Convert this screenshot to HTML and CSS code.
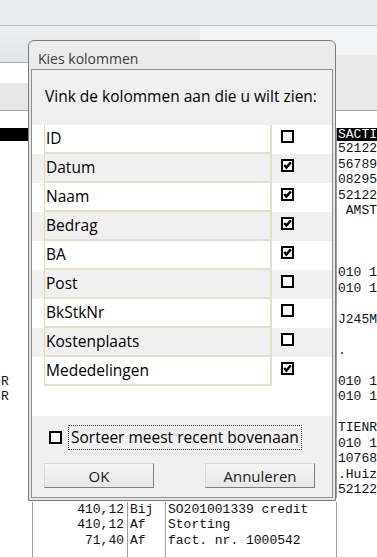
FILE: index.html
```html
<!DOCTYPE html>
<html lang="nl">
<head>
<meta charset="UTF-8">
<meta name="viewport" content="width=device-width, initial-scale=1.0">
<title>Kies kolommen</title>
<link rel="stylesheet" href="styles.css">
</head>
<body>
  <div class="app">
    <div class="menubar"></div>
    <div class="toolband">
      <div class="toolband-left">
        <div class="tool-top"></div>
        <div class="tool-white"></div>
        <div class="tool-gray"></div>
      </div>
      <div class="toolband-right">
        <div class="tool-top-right"></div>
      </div>
    </div>
    <div class="white-strip"></div>

    <div class="grid">
      <div class="row head"><span class="c0"></span><span class="c1"></span><span class="c2"></span><span class="c3"></span><span class="c4">SACTI</span></div>
      <div class="row"><span class="c0"></span><span class="c1"></span><span class="c2"></span><span class="c3"></span><span class="c4">52122</span></div>
      <div class="row"><span class="c0"></span><span class="c1"></span><span class="c2"></span><span class="c3"></span><span class="c4">56789</span></div>
      <div class="row"><span class="c0"></span><span class="c1"></span><span class="c2"></span><span class="c3"></span><span class="c4">08295</span></div>
      <div class="row"><span class="c0"></span><span class="c1"></span><span class="c2"></span><span class="c3"></span><span class="c4">52122</span></div>
      <div class="row"><span class="c0"></span><span class="c1"></span><span class="c2"></span><span class="c3"></span><span class="c4"> AMST</span></div>
      <div class="row"><span class="c0"></span><span class="c1"></span><span class="c2"></span><span class="c3"></span><span class="c4"></span></div>
      <div class="row"><span class="c0"></span><span class="c1"></span><span class="c2"></span><span class="c3"></span><span class="c4"></span></div>
      <div class="row"><span class="c0"></span><span class="c1"></span><span class="c2"></span><span class="c3"></span><span class="c4"></span></div>
      <div class="row"><span class="c0"></span><span class="c1"></span><span class="c2"></span><span class="c3"></span><span class="c4">010 1</span></div>
      <div class="row"><span class="c0"></span><span class="c1"></span><span class="c2"></span><span class="c3"></span><span class="c4">010 1</span></div>
      <div class="row"><span class="c0"></span><span class="c1"></span><span class="c2"></span><span class="c3"></span><span class="c4"></span></div>
      <div class="row"><span class="c0"></span><span class="c1"></span><span class="c2"></span><span class="c3"></span><span class="c4">J245M</span></div>
      <div class="row"><span class="c0"></span><span class="c1"></span><span class="c2"></span><span class="c3"></span><span class="c4"></span></div>
      <div class="row"><span class="c0"></span><span class="c1"></span><span class="c2"></span><span class="c3"></span><span class="c4">.</span></div>
      <div class="row"><span class="c0"></span><span class="c1"></span><span class="c2"></span><span class="c3"></span><span class="c4"></span></div>
      <div class="row"><span class="c0">R</span><span class="c1"></span><span class="c2"></span><span class="c3"></span><span class="c4">010 1</span></div>
      <div class="row"><span class="c0">R</span><span class="c1"></span><span class="c2"></span><span class="c3"></span><span class="c4">010 1</span></div>
      <div class="row"><span class="c0"></span><span class="c1"></span><span class="c2"></span><span class="c3"></span><span class="c4"></span></div>
      <div class="row"><span class="c0"></span><span class="c1"></span><span class="c2"></span><span class="c3"></span><span class="c4">TIENR</span></div>
      <div class="row"><span class="c0"></span><span class="c1"></span><span class="c2"></span><span class="c3"></span><span class="c4">010 1</span></div>
      <div class="row"><span class="c0"></span><span class="c1"></span><span class="c2"></span><span class="c3"></span><span class="c4">10768</span></div>
      <div class="row"><span class="c0"></span><span class="c1"></span><span class="c2"></span><span class="c3"></span><span class="c4">.Huiz</span></div>
      <div class="row"><span class="c0"></span><span class="c1"></span><span class="c2"></span><span class="c3"></span><span class="c4">52122</span></div>
      <div class="row first-amount"><span class="c0"></span><span class="c1">410,12</span><span class="c2">Bij</span><span class="c3">SO201001339 credit</span><span class="c4"></span></div>
      <div class="row"><span class="c0"></span><span class="c1">410,12</span><span class="c2">Af</span><span class="c3">Storting</span><span class="c4"></span></div>
      <div class="row"><span class="c0"></span><span class="c1">71,40</span><span class="c2">Af</span><span class="c3">fact. nr. 1000542</span><span class="c4"></span></div>
      <div class="row"><span class="c0"></span><span class="c1"></span><span class="c2"></span><span class="c3"></span><span class="c4"></span></div>
    </div>
  </div>

  <div class="dialog">
    <div class="dialog-title">Kies kolommen</div>
    <div class="dialog-client">
      <div class="dialog-intro">Vink de kolommen aan die u wilt zien:</div>

      <div class="column-list">
        <div class="column-row">
          <div class="column-name">ID</div>
          <div class="column-check"><svg class="checkbox" width="13" height="13" viewBox="0 0 13 13"><rect x="1" y="1" width="11" height="11" fill="#fff" stroke="#000" stroke-width="2"/></svg></div>
        </div>
        <div class="column-row">
          <div class="column-name">Datum</div>
          <div class="column-check"><svg class="checkbox" width="13" height="13" viewBox="0 0 13 13"><rect x="1" y="1" width="11" height="11" fill="#fff" stroke="#000" stroke-width="2"/><polyline points="3.2,6 5.4,8.6 9.8,3.4" fill="none" stroke="#000" stroke-width="2.4"/></svg></div>
        </div>
        <div class="column-row">
          <div class="column-name">Naam</div>
          <div class="column-check"><svg class="checkbox" width="13" height="13" viewBox="0 0 13 13"><rect x="1" y="1" width="11" height="11" fill="#fff" stroke="#000" stroke-width="2"/><polyline points="3.2,6 5.4,8.6 9.8,3.4" fill="none" stroke="#000" stroke-width="2.4"/></svg></div>
        </div>
        <div class="column-row">
          <div class="column-name">Bedrag</div>
          <div class="column-check"><svg class="checkbox" width="13" height="13" viewBox="0 0 13 13"><rect x="1" y="1" width="11" height="11" fill="#fff" stroke="#000" stroke-width="2"/><polyline points="3.2,6 5.4,8.6 9.8,3.4" fill="none" stroke="#000" stroke-width="2.4"/></svg></div>
        </div>
        <div class="column-row">
          <div class="column-name">BA</div>
          <div class="column-check"><svg class="checkbox" width="13" height="13" viewBox="0 0 13 13"><rect x="1" y="1" width="11" height="11" fill="#fff" stroke="#000" stroke-width="2"/><polyline points="3.2,6 5.4,8.6 9.8,3.4" fill="none" stroke="#000" stroke-width="2.4"/></svg></div>
        </div>
        <div class="column-row">
          <div class="column-name">Post</div>
          <div class="column-check"><svg class="checkbox" width="13" height="13" viewBox="0 0 13 13"><rect x="1" y="1" width="11" height="11" fill="#fff" stroke="#000" stroke-width="2"/></svg></div>
        </div>
        <div class="column-row">
          <div class="column-name">BkStkNr</div>
          <div class="column-check"><svg class="checkbox" width="13" height="13" viewBox="0 0 13 13"><rect x="1" y="1" width="11" height="11" fill="#fff" stroke="#000" stroke-width="2"/></svg></div>
        </div>
        <div class="column-row">
          <div class="column-name">Kostenplaats</div>
          <div class="column-check"><svg class="checkbox" width="13" height="13" viewBox="0 0 13 13"><rect x="1" y="1" width="11" height="11" fill="#fff" stroke="#000" stroke-width="2"/></svg></div>
        </div>
        <div class="column-row">
          <div class="column-name">Mededelingen</div>
          <div class="column-check"><svg class="checkbox" width="13" height="13" viewBox="0 0 13 13"><rect x="1" y="1" width="11" height="11" fill="#fff" stroke="#000" stroke-width="2"/><polyline points="3.2,6 5.4,8.6 9.8,3.4" fill="none" stroke="#000" stroke-width="2.4"/></svg></div>
        </div>
      </div>

      <div class="dialog-footer">
        <div class="sort-option">
          <svg class="checkbox" width="13" height="13" viewBox="0 0 13 13"><rect x="1" y="1" width="11" height="11" fill="#fff" stroke="#000" stroke-width="2"/></svg>
          <span class="sort-label">Sorteer meest recent bovenaan</span>
        </div>
        <div class="dialog-buttons">
          <button type="button">OK</button>
          <button type="button">Annuleren</button>
        </div>
      </div>
    </div>
  </div>
</body>
</html>
```

FILE: styles.css
```css
body {
  margin: 0;
  width: 377px;
  height: 557px;
  overflow: hidden;
  background-color: #fff;
  font-family: "Open Sans", "Noto Sans", sans-serif;
  position: relative;
}

/* application behind the dialog */

.menubar {
  height: 25px;
  background-color: #e9ecf0;
  border-bottom: 1px solid #bcc0c6;
}

.toolband {
  display: flex;
  height: 84px;
  border-bottom: 1px solid #a3a3a3;
}

.toolband-left {
  width: 200px;
  display: flex;
  flex-direction: column;
}

.tool-top {
  height: 36px;
  background: linear-gradient(#edf0f3, #e2e5e9);
  border-bottom: 1px solid #a9adb3;
}

.tool-white {
  height: 20px;
  background-color: #fff;
}

.tool-gray {
  flex: 1;
  background-color: #e8e8e8;
}

.toolband-right {
  flex: 1;
  background-color: #e9e9e9;
}

.tool-top-right {
  height: 29px;
  background-color: #f2f3f5;
}

.white-strip {
  height: 17px;
}

.grid {
  font-family: "Liberation Mono", monospace;
  font-size: 13px;
  color: #111;
}

.row {
  display: flex;
  height: 15.5px;
  line-height: 15.5px;
  white-space: pre;
}

.row.head {
  height: 13px;
  line-height: 13px;
  background-color: #000;
  color: #fff;
}

.row.first-amount {
  margin-top: 4px;
}

.c0 {
  width: 32px;
  padding-left: 1px;
  box-sizing: border-box;
}

.c1 {
  width: 95px;
  text-align: right;
  padding-right: 3px;
  border-left: 1px solid #a0a0a0;
  box-sizing: border-box;
}

.c2 {
  width: 38px;
  padding-left: 2px;
  border-left: 1px solid #a0a0a0;
  box-sizing: border-box;
}

.c3 {
  width: 171px;
  padding-left: 2px;
  border-left: 1px solid #a0a0a0;
  box-sizing: border-box;
}

.c4 {
  flex: 1;
  padding-left: 1px;
  border-left: 1px solid #a0a0a0;
  overflow: hidden;
}

/* dialog window */

.dialog {
  position: absolute;
  left: 28px;
  top: 40px;
  width: 308px;
  height: 461px;
  box-sizing: border-box;
  padding: 0 2px 2px 2px;
  border: 1px solid #7a7a7a;
  border-radius: 6px 6px 0 0;
  background: linear-gradient(#ededee, #e6e6e8 60px);
  display: flex;
  flex-direction: column;
}

.dialog-title {
  height: 28px;
  line-height: 36px;
  padding-left: 7px;
  font-size: 14px;
  color: #3a3a3a;
}

.dialog-client {
  flex: 1;
  border: 1px solid #8f8f8f;
  background-color: #f0f0f0;
  display: flex;
  flex-direction: column;
}

.dialog-intro {
  height: 55px;
  box-sizing: border-box;
  padding: 16px 0 0 13px;
  line-height: 20px;
  font-size: 15.5px;
  color: #000;
}

.column-list {
  height: 291px;
  background-color: #fff;
}

.column-row {
  display: flex;
  height: 29px;
}

.column-row:nth-child(even) {
  background-color: #f0f0f0;
}

.column-name {
  width: 228px;
  margin-left: 12px;
  box-sizing: border-box;
  border-left: 1px solid #ded9c4;
  border-right: 2px solid #e3dfcc;
  border-bottom: 2px solid #e3dfcc;
  padding-left: 1px;
  line-height: 27px;
  font-size: 15.5px;
  color: #000;
}

.column-check {
  padding: 5px 0 0 9px;
}

.checkbox {
  display: block;
}

.dialog-footer {
  flex: 1;
  padding: 9px 0 0 17px;
}

.sort-option {
  display: flex;
  align-items: center;
  gap: 6px;
  height: 25px;
}

.sort-label {
  display: block;
  height: 25px;
  box-sizing: border-box;
  padding: 0 2px;
  line-height: 23px;
  border: 1px dotted #333;
  font-size: 15.5px;
  color: #000;
}

.dialog-buttons {
  display: flex;
  gap: 51px;
  margin: 13px 0 0 -5px;
}

.dialog-buttons button {
  width: 110px;
  height: 25px;
  padding: 0;
  font-family: "Open Sans", "Noto Sans", sans-serif;
  font-size: 15px;
  color: #1a1a1a;
  background: linear-gradient(#f6f6f6, #e7e7e7);
  border: 1px solid;
  border-color: #d8d8d8 #7d7d7d #7d7d7d #d8d8d8;
}
```
